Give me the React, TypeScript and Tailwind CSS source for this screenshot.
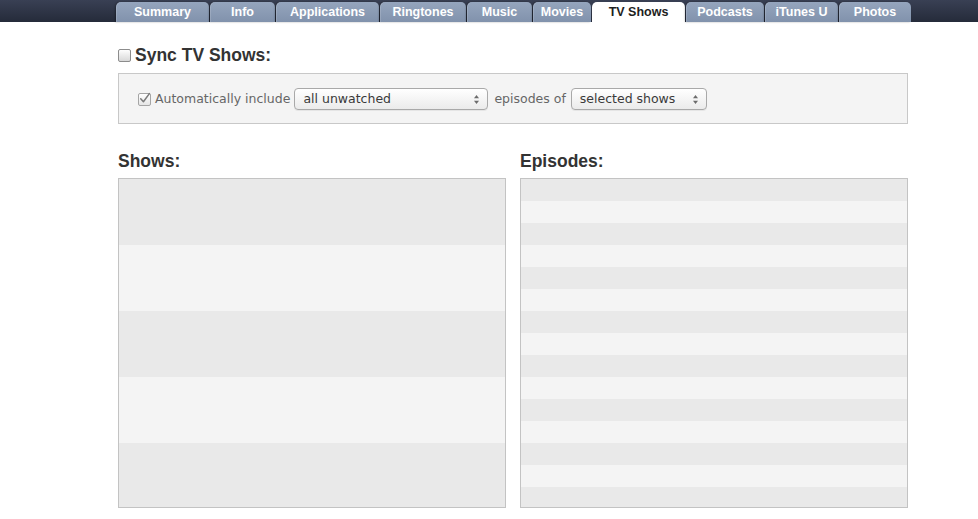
import React from "react";

type Tab = { label: string; width: string };

const tabs: Tab[] = [
  { label: "Summary", width: "w-[93px]" },
  { label: "Info", width: "w-[65px]" },
  { label: "Applications", width: "w-[103px]" },
  { label: "Ringtones", width: "w-[86px]" },
  { label: "Music", width: "w-[65px]" },
  { label: "Movies", width: "w-[58px]" },
  { label: "TV Shows", width: "w-[93px]" },
  { label: "Podcasts", width: "w-[78px]" },
  { label: "iTunes U", width: "w-[73px]" },
  { label: "Photos", width: "w-[72px]" },
];

const activeTab = "TV Shows";

function SelectArrows() {
  return (
    <svg width="7" height="11" viewBox="0 0 7 11" className="shrink-0">
      <path d="M3.5 1 L6 4.2 L1 4.2 Z" fill="#6b6b6b" />
      <path d="M3.5 10 L6 6.8 L1 6.8 Z" fill="#6b6b6b" />
    </svg>
  );
}

function PopUp({ value, width }: { value: string; width: string }) {
  return (
    <div
      className={`flex h-[22px] ${width} items-center justify-between rounded-[4px] border border-[#a9a9a9] bg-gradient-to-b from-white to-[#ebebeb] pl-[8px] pr-[7px] shadow-[0_1px_0_rgba(0,0,0,0.06)]`}
    >
      <span className="text-[12.5px] leading-none text-[#3a3a3a]">{value}</span>
      <SelectArrows />
    </div>
  );
}

function Checkbox({ checked }: { checked?: boolean }) {
  return (
    <span
      className={`relative inline-flex h-[13px] w-[13px] shrink-0 items-center justify-center rounded-[2px] border ${
        checked
          ? "border-[#a5a5a5] bg-gradient-to-b from-white to-[#e6e6e6]"
          : "border-[#8c8c8c] bg-gradient-to-b from-[#fdfdfd] to-[#d8d8d8]"
      }`}
    >
      {checked && (
        <svg
          width="13"
          height="13"
          viewBox="0 0 12 12"
          className="absolute -right-[1px] -top-[2px]"
        >
          <path
            d="M2.5 6.2 L5 9 L10.5 1.5"
            fill="none"
            stroke="#7b7b7b"
            strokeWidth="1.4"
            strokeLinecap="round"
            strokeLinejoin="round"
          />
        </svg>
      )}
    </span>
  );
}

function StripedList({
  rows,
  rowHeight,
}: {
  rows: number;
  rowHeight: string;
}) {
  return (
    <div className="h-[330px] w-[388px] overflow-hidden border border-[#c3c3c3]">
      {Array.from({ length: rows }).map((_, i) => (
        <div
          key={i}
          className={`${rowHeight} ${i % 2 === 0 ? "bg-[#e9e9e9]" : "bg-[#f4f4f4]"}`}
        />
      ))}
    </div>
  );
}

export default function App() {
  return (
    <div className="h-[519px] w-[978px] overflow-hidden bg-white font-['DejaVu_Sans',sans-serif]">
      <nav className="flex h-[22px] items-end gap-[1px] bg-gradient-to-b from-[#394054] to-[#252b3a] pl-[116px]">
        {tabs.map((tab) => {
          const isActive = tab.label === activeTab;
          return (
            <div
              key={tab.label}
              className={`flex h-[20px] ${tab.width} items-center justify-center rounded-t-[5px] font-['Liberation_Sans',Arial,sans-serif] text-[12.5px] font-bold ${
                isActive
                  ? "bg-white text-[#1e1e1e]"
                  : "bg-gradient-to-b from-[#95a5bd] to-[#8192ac] text-white shadow-[inset_1px_0_0_rgba(255,255,255,0.15),-1px_0_2px_rgba(0,0,0,0.35)]"
              }`}
            >
              {tab.label}
            </div>
          );
        })}
      </nav>

      <div className="ml-[118px] w-[790px]">
        <label className="mt-[23px] flex h-[20px] items-center gap-[4px]">
          <Checkbox />
          <span className="font-['Liberation_Sans',Arial,sans-serif] text-[17.5px] font-bold text-[#333]">
            Sync TV Shows:
          </span>
        </label>

        <div className="mt-[8px] flex h-[51px] items-center border border-[#c8c8c8] bg-[#f4f4f4] pl-[19px] pt-[1px]">
          <Checkbox checked />
          <span className="ml-[4px] text-[12.5px] text-[#666]">
            Automatically include
          </span>
          <div className="ml-[4px]">
            <PopUp value="all unwatched" width="w-[194px]" />
          </div>
          <span className="ml-[6px] text-[12.5px] text-[#666]">episodes of</span>
          <div className="ml-[5px]">
            <PopUp value="selected shows" width="w-[136px]" />
          </div>
        </div>

        <div className="mt-[27px] flex gap-[14px]">
          <section>
            <h2 className="h-[20px] font-['Liberation_Sans',Arial,sans-serif] text-[17.5px] font-bold leading-[20px] text-[#333]">
              Shows:
            </h2>
            <div className="mt-[7px]">
              <StripedList rows={5} rowHeight="h-[66px]" />
            </div>
          </section>
          <section>
            <h2 className="h-[20px] font-['Liberation_Sans',Arial,sans-serif] text-[17.5px] font-bold leading-[20px] text-[#333]">
              Episodes:
            </h2>
            <div className="mt-[7px]">
              <StripedList rows={15} rowHeight="h-[22px]" />
            </div>
          </section>
        </div>
      </div>
    </div>
  );
}
